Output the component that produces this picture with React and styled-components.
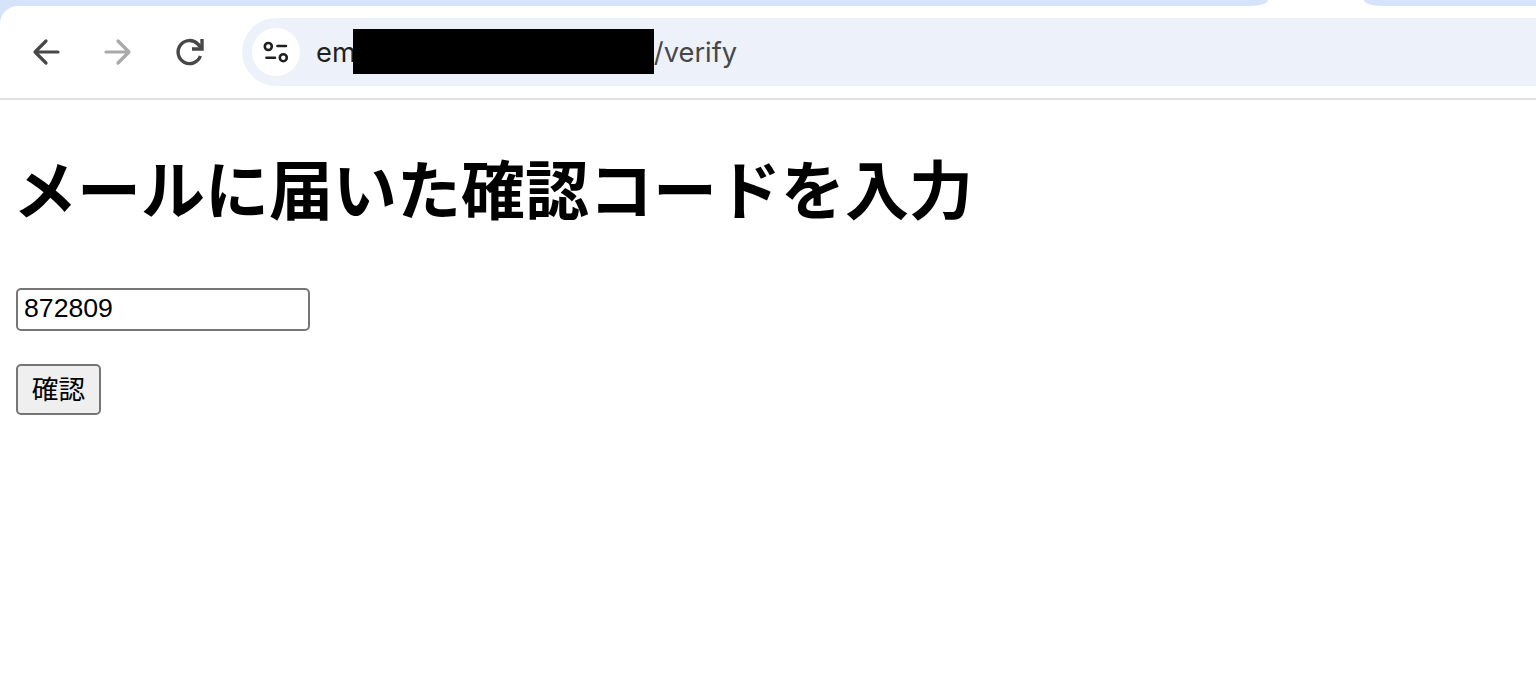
import React from 'react'
import styled, { createGlobalStyle } from 'styled-components'

const GlobalStyle = createGlobalStyle`
  body {
    margin: 0;
    background: #ffffff;
    font-family: 'Liberation Sans', 'Noto Sans CJK JP', sans-serif;
  }
`
const TabStrip = styled.div`
  display: flex;
  justify-content: space-between;
  height: 6px;
  background: #ffffff;
`
const TabLeft = styled.div`
  width: 1268px;
  background: #d5e3fb;
  border-bottom-right-radius: 18px 6px;
`
const TabRight = styled.div`
  width: 172px;
  background: #d5e3fb;
  border-bottom-left-radius: 18px 6px;
`
const ToolbarBack = styled.div`
  background: #d5e3fb;
`
const Toolbar = styled.div`
  display: flex;
  align-items: center;
  box-sizing: border-box;
  height: 94px;
  padding: 12px 0 12px 10px;
  background: #ffffff;
  border-top-left-radius: 18px;
  border-bottom: 2px solid #e0e0e0;
`
const NavButton = styled.div`
  display: flex;
  align-items: center;
  justify-content: center;
  width: 72px;
  height: 68px;
  color: ${(p) => (p.$disabled ? '#a9a9a9' : '#474747')};
`
const AddressBar = styled.div`
  display: flex;
  align-items: center;
  flex: 1;
  height: 68px;
  margin-left: 16px;
  padding-left: 10px;
  background: #edf2fa;
  border-radius: 34px 0 0 34px;
`
const SiteIcon = styled.div`
  display: flex;
  align-items: center;
  justify-content: center;
  width: 48px;
  height: 48px;
  margin-right: 16px;
  background: #ffffff;
  border-radius: 50%;
`
const Url = styled.div`
  display: flex;
  align-items: center;
  font-family: Inter, sans-serif;
  font-size: 27.3px;
  color: #1f1f1f;
`
const Redacted = styled.span`
  display: block;
  width: 301px;
  height: 45px;
  margin: 0 0 2px -3px;
  background: #000000;
`
const UrlPath = styled.span`
  color: #474747;
`
const Main = styled.main`
  padding: 0 16px;
`
const Title = styled.h1`
  margin: 0 0 0 -3px;
  padding-top: 44px;
  font-family: 'Noto Sans CJK JP', sans-serif;
  font-size: 64px;
  line-height: 84px;
  font-weight: 700;
  color: #000000;
`
const CodeField = styled.div`
  margin-top: 60px;
`
const CodeInput = styled.input`
  display: block;
  box-sizing: border-box;
  width: 294px;
  height: 43px;
  padding: 0 6px 2px;
  font-family: 'Liberation Sans', sans-serif;
  font-size: 26.67px;
  color: #000000;
  background: #ffffff;
  border: 2px solid #767676;
  border-radius: 5px;
`
const SubmitButton = styled.button`
  display: block;
  box-sizing: border-box;
  width: 85px;
  height: 51px;
  margin-top: 33px;
  padding: 0 0 5px;
  font-family: 'Liberation Sans', 'Noto Sans CJK JP', sans-serif;
  font-size: 26.67px;
  color: #000000;
  background: #efefef;
  border: 2px solid #767676;
  border-radius: 5px;
`

const ArrowIcon = ({ flip }) => (
  <svg
    width="30"
    height="30"
    viewBox="0 0 30 30"
    fill="none"
    stroke="currentColor"
    strokeWidth="3.2"
    strokeLinecap="round"
    strokeLinejoin="round"
    transform={flip ? 'scale(-1 1)' : undefined}
  >
    <path d="M4 15H27M15 4L4 15L15 26" />
  </svg>
)

const ReloadIcon = () => (
  <svg width="30" height="30" viewBox="0 0 30 30" fill="none" stroke="currentColor" strokeWidth="3.4">
    <path d="M25.4 19A11.5 11.5 0 1 1 22.8 7L26.5 11" />
    <path d="M27 2V12H17" strokeLinejoin="miter" />
  </svg>
)

const TuneIcon = () => (
  <svg width="28" height="26" viewBox="0 0 28 26" fill="none" stroke="#1f1f1f" strokeWidth="2.6" strokeLinecap="round">
    <circle cx="6.3" cy="7.5" r="3.5" />
    <path d="M15.5 7H24M4.5 18.7H13" />
    <circle cx="21.3" cy="18.7" r="3.5" />
  </svg>
)

const App = () => {
  return (
    <>
      <GlobalStyle />
      <TabStrip>
        <TabLeft />
        <TabRight />
      </TabStrip>
      <ToolbarBack>
        <Toolbar>
          <NavButton>
            <ArrowIcon />
          </NavButton>
          <NavButton $disabled>
            <ArrowIcon flip />
          </NavButton>
          <NavButton>
            <ReloadIcon />
          </NavButton>
          <AddressBar>
            <SiteIcon>
              <TuneIcon />
            </SiteIcon>
            <Url>
              em
              <Redacted />
              <UrlPath>/verify</UrlPath>
            </Url>
          </AddressBar>
        </Toolbar>
      </ToolbarBack>
      <Main>
        <Title>メールに届いた確認コードを入力</Title>
        <CodeField>
          <CodeInput defaultValue="872809" />
        </CodeField>
        <SubmitButton>確認</SubmitButton>
      </Main>
    </>
  )
}

export default App
